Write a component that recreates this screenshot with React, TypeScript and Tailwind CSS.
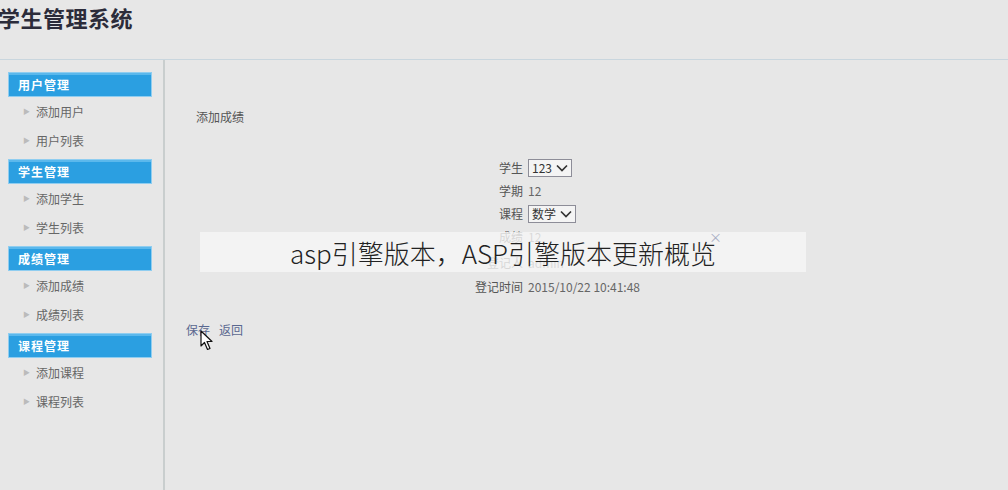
import React from "react";

const groups = [
  { title: "用户管理", items: ["添加用户", "用户列表"] },
  { title: "学生管理", items: ["添加学生", "学生列表"] },
  { title: "成绩管理", items: ["添加成绩", "成绩列表"] },
  { title: "课程管理", items: ["添加课程", "课程列表"] },
];

function Select({ value }: { value: string }) {
  return (
    <span className="inline-flex items-center h-[18px] border border-[#8d8d98] bg-[#f4f4f4] pl-[3px] pr-[3px] gap-[4px] text-[12px] text-[#333] leading-none">
      <span>{value}</span>
      <svg width="12" height="8" viewBox="0 0 12 8">
        <path d="M1 1.5 L6 6.5 L11 1.5" fill="none" stroke="#333" strokeWidth="1.7" />
      </svg>
    </span>
  );
}

export default function App() {
  return (
    <div
      className="relative w-[1008px] h-[490px] overflow-hidden bg-[#e7e7e7] text-[#555]"
      style={{ fontFamily: '"Noto Sans CJK SC", "Noto Sans", sans-serif' }}
    >
      <div className="h-[60px] border-b border-[#c9d6de]">
        <div className="ml-[-2px] pt-[2px] text-[22px] font-bold leading-[30px] text-[#2c2c3a] tracking-[0.5px]">
          学生管理系统
        </div>
      </div>
      <div className="flex h-[430px]">
        <div className="w-[165px] shrink-0 border-r-2 border-[#c9cece] pt-[12px] pl-[8px] flex flex-col gap-[4px]">
          {groups.map((g) => (
            <div key={g.title} className="flex flex-col">
              <div className="w-[144px] h-[25px] bg-[#2b9fe1] border border-[#8fcdf0] shadow-[inset_0_2px_0_#5bb8ec] flex items-center pl-[9px] text-[12px] font-bold text-white tracking-[1px]">
                {g.title}
              </div>
              {g.items.map((it) => (
                <div key={it} className="h-[29px] flex items-center pl-[15px] gap-[6px] text-[12px] text-[#666]">
                  <span className="text-[7px] text-[#bbbbbb]">▶</span>
                  <span>{it}</span>
                </div>
              ))}
            </div>
          ))}
        </div>
        <div className="flex-1 flex flex-col pt-[49px]">
          <div className="pl-[31px] text-[12px] text-[#555] leading-[16px]">添加成绩</div>
          <div className="mt-[31px] ml-[298px] grid grid-cols-[60px_auto] gap-x-[5px] text-[12px] items-center w-max">
            <span className="text-right text-[#555] leading-[23px]">学生</span>
            <span className="flex items-center h-[23px]"><Select value="123" /></span>
            <span className="text-right text-[#555] leading-[23px]">学期</span>
            <span className="text-[#666] leading-[23px]">12</span>
            <span className="text-right text-[#555] leading-[23px]">课程</span>
            <span className="flex items-center h-[23px]"><Select value="数学" /></span>
            <span className="text-right text-[#555] leading-[23px]">成绩</span>
            <span className="text-[#666] leading-[23px]">12</span>
            <span className="text-right text-[#555] leading-[25px] mt-[2px]">登记人</span>
            <span className="text-[#666] leading-[25px] mt-[2px]">admin</span>
            <span className="text-right text-[#555] leading-[24px]">登记时间</span>
            <span className="text-[#666] leading-[24px]">2015/10/22 10:41:48</span>
          </div>
          <div className="mt-[22px] pl-[21px] flex gap-[9px] text-[12px] text-[#5a6890]">
            <span>保存</span>
            <span>返回</span>
          </div>
        </div>
      </div>

      <div className="absolute left-[200px] top-[232px] w-[606px] h-[40px] bg-[#f6f6f6]/80 flex items-center justify-center text-[26px] text-[#222] font-light">
        asp引擎版本，ASP引擎版本更新概览
      </div>

      <span className="absolute left-[709px] top-[229px] text-[13px] leading-[16px] text-[#a8adc4]">×</span>

      <svg className="absolute left-[200px] top-[330px]" width="16" height="22" viewBox="0 0 16 22">
        <path d="M1 1 L1 16 L4.5 12.5 L7.5 19.5 L10 18.5 L7 11.5 L12 11.5 Z" fill="#fff" stroke="#111" strokeWidth="1.2" strokeLinejoin="round" />
      </svg>
    </div>
  );
}
